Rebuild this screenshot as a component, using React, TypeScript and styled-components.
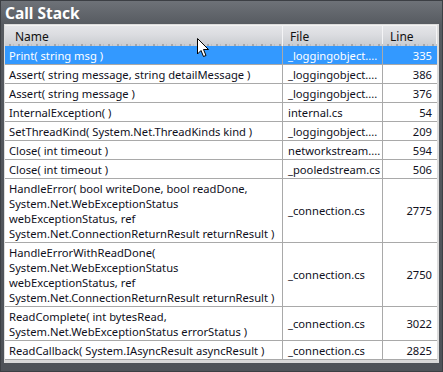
import React from "react";
import styled, { createGlobalStyle } from "styled-components";

type Frame = { name: string[]; file: string; line: number; selected?: boolean };

const frames: Frame[] = [
  { name: ["Print( string msg )"], file: "_loggingobject....", line: 335, selected: true },
  { name: ["Assert( string message, string detailMessage )"], file: "_loggingobject....", line: 386 },
  { name: ["Assert( string message )"], file: "_loggingobject....", line: 376 },
  { name: ["InternalException(  )"], file: "internal.cs", line: 54 },
  { name: ["SetThreadKind( System.Net.ThreadKinds kind )"], file: "_loggingobject....", line: 209 },
  { name: ["Close( int timeout )"], file: "networkstream....", line: 594 },
  { name: ["Close( int timeout )"], file: "_pooledstream.cs", line: 506 },
  {
    name: [
      "HandleError( bool writeDone, bool readDone,",
      "System.Net.WebExceptionStatus",
      "webExceptionStatus, ref",
      "System.Net.ConnectionReturnResult returnResult )",
    ],
    file: "_connection.cs",
    line: 2775,
  },
  {
    name: [
      "HandleErrorWithReadDone(",
      "System.Net.WebExceptionStatus",
      "webExceptionStatus, ref",
      "System.Net.ConnectionReturnResult returnResult )",
    ],
    file: "_connection.cs",
    line: 2750,
  },
  {
    name: ["ReadComplete( int bytesRead,", "System.Net.WebExceptionStatus errorStatus )"],
    file: "_connection.cs",
    line: 3022,
  },
  { name: ["ReadCallback( System.IAsyncResult asyncResult )"], file: "_connection.cs", line: 2825 },
];

const GlobalStyle = createGlobalStyle`
  html, body {
    margin: 0;
    padding: 0;
    background: #ffffff;
  }
  body {
    font-family: "Noto Sans", "Open Sans", sans-serif;
  }
`;

const Window = styled.div`
  width: 443px;
  height: 372px;
  box-sizing: border-box;
  display: flex;
  flex-direction: column;
  background: linear-gradient(#6e7278 0px, #565a60 24px, #4e5258 100%);
  border: 1px solid #3c3f44;
  padding: 0 3px 8px 3px;
  position: relative;
  overflow: hidden;
`;

const TitleBar = styled.div`
  height: 23px;
  display: flex;
  align-items: center;
  padding-left: 1px;
  color: #ffffff;
  font-weight: 700;
  font-size: 15.5px;
  flex-shrink: 0;
`;

const Body = styled.div`
  flex: 1;
  display: flex;
  flex-direction: column;
  background: #ffffff;
  border: 1px solid #dcdcdc;
  border-bottom-width: 3px;
  border-bottom-color: #d8d8d8;
  border-right-width: 2px;
  overflow: hidden;
`;

const Grid = styled.div`
  display: grid;
  grid-template-columns: 278px 100px 1fr;
`;

const HeaderRow = styled(Grid)`
  height: 22px;
  background: linear-gradient(#e4e5e8 0%, #dcdde1 40%, #c9cbd0 100%);
  border-top: 1px solid #f2f2f2;
  position: relative;
`;

const HeaderCell = styled.div<{ $pad: number }>`
  display: flex;
  align-items: center;
  padding-left: ${(p) => p.$pad}px;
  font-size: 12px;
  color: #111111;
  border-right: 1px solid #f4f4f6;
  &:last-child {
    border-right: none;
  }
`;

const DragGhost = styled.div`
  position: absolute;
  left: 4px;
  right: 0;
  bottom: 0;
  height: 2px;
  background: repeating-linear-gradient(
    90deg,
    #9a9ca0 0 2px,
    transparent 2px 4px,
    #b9babd 4px 5px,
    transparent 5px 9px
  );
  opacity: 0.8;
`;

const Row = styled(Grid)<{ $selected?: boolean }>`
  background: ${(p) => (p.$selected ? "#3399ff" : "#ffffff")};
  color: ${(p) => (p.$selected ? "#ffffff" : "#10101c")};
  border-bottom: 1px solid #a9a9a9;
  font-size: 11.2px;
  line-height: 15px;
`;

const NameCell = styled.div`
  padding: 2px 4px 1px 4px;
  min-height: 15px;
  white-space: nowrap;
  overflow: hidden;
  border-right: 1px solid #a9a9a9;
`;

const FileCell = styled.div`
  display: flex;
  align-items: center;
  padding: 0 5px;
  white-space: nowrap;
  overflow: hidden;
  border-right: 1px solid #a9a9a9;
`;

const LineCell = styled.div`
  display: flex;
  align-items: center;
  justify-content: flex-end;
  padding-right: 5px;
`;

const Cursor = styled.svg`
  position: absolute;
  left: 196px;
  top: 37px;
  width: 12px;
  height: 20px;
`;

export default function App() {
  return (
    <>
      <GlobalStyle />
      <Window>
        <TitleBar>Call Stack</TitleBar>
        <Body>
          <HeaderRow>
            <HeaderCell $pad={10}>Name</HeaderCell>
            <HeaderCell $pad={7}>File</HeaderCell>
            <HeaderCell $pad={7}>Line</HeaderCell>
            <DragGhost />
          </HeaderRow>
          {frames.map((f, i) => (
            <Row key={i} $selected={f.selected}>
              <NameCell>
                {f.name.map((l, j) => (
                  <div key={j}>{l}</div>
                ))}
              </NameCell>
              <FileCell>{f.file}</FileCell>
              <LineCell>{f.line}</LineCell>
            </Row>
          ))}
        </Body>
        <Cursor viewBox="0 0 12 20">
          <path
            d="M0.5 0.5 L0.5 16 L4 12.5 L6.5 18.5 L9 17.5 L6.5 11.5 L11.5 11.5 Z"
            fill="#ffffff"
            stroke="#000000"
            strokeWidth="1"
            strokeLinejoin="round"
          />
        </Cursor>
      </Window>
    </>
  );
}
